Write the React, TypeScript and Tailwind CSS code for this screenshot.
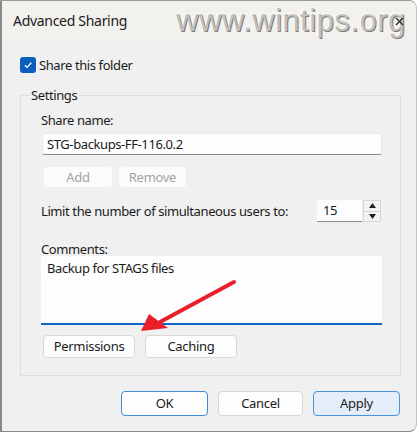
import React from "react";

const font = { fontFamily: '"Noto Sans", "Open Sans", sans-serif' };

function Btn({ children, className }: { children: React.ReactNode; className: string }) {
  return (
    <div className={`flex items-center justify-center rounded-[4px] border text-[13px] tracking-[-0.3px] leading-none ${className}`}>
      {children}
    </div>
  );
}

export default function App() {
  return (
    <div className="w-[420px] h-[433px] bg-white" style={font}>
      <div className="relative w-[417px] h-[432px] flex flex-col border-l-2 border-t border-b border-r border-l-[#8a8a8a] border-t-[#9a9a9a] border-b-[#8a8a8a] border-r-[#c4c4c4] rounded-tr-[8px] rounded-br-[8px] overflow-hidden bg-[#f0f0f0] text-[#1b1b1b] text-[13px] tracking-[-0.4px]">
        {/* Title bar */}
        <div className="relative h-[37px] shrink-0 bg-[#f3f1ee] flex items-center pl-[11px]">
          <span className="text-[14px] tracking-[-0.3px] leading-none pt-[2px] text-[#1a1a1a]">Advanced Sharing</span>
          <span
            className="absolute left-[174px] top-[-3px] text-[31px] tracking-[0.5px] text-[#c4c1bd] [text-shadow:1px_1px_0_#7a7a7a,-1px_-1px_0_#ffffff]"
            style={{ fontFamily: '"Liberation Sans", Arial, sans-serif' }}
          >
            www.wintips.org
          </span>
          <svg className="absolute left-[393px] top-[16px]" width="9" height="9" viewBox="0 0 9 9">
            <path d="M1 1 L8 8 M8 1 L1 8" stroke="#2a2a2a" strokeWidth="1.3" />
          </svg>
        </div>

        {/* Body */}
        <div className="flex flex-col px-[18px] pt-[19px]">
          <div className="flex items-center h-[16px]">
            <div className="w-[16px] h-[16px] rounded-[3px] bg-[#0a5ebd] flex items-center justify-center">
              <svg width="10" height="10" viewBox="0 0 10 10">
                <path d="M1.8 5.2 L4 7.4 L8.3 2.8" fill="none" stroke="#fff" strokeWidth="1.3" />
              </svg>
            </div>
            <span className="ml-[3px] leading-none">Share this folder</span>
          </div>

          {/* Group box */}
          <div className="mt-[22px] w-[381px] h-[281px] border border-[#dedede] flex flex-col pl-[20px]">
            <span className="-mt-[10px] -ml-[11px] w-fit px-[1px] bg-[#f0f0f0] leading-[18px]">Settings</span>

            <span className="mt-[7px] leading-[18px]">Share name:</span>
            <div className="mt-[4px] ml-[1px] w-[340px] h-[22px] bg-[#fdfdfd] border border-[#e8e8e8] border-b-[#8a8a8a] rounded-[3px] flex items-center pl-[4px] leading-none">
              STG-backups-FF-116.0.2
            </div>

            <div className="mt-[11px] ml-[2px] flex gap-[5px]">
              <Btn className="w-[70px] h-[22px] bg-[#fbfbfb] border-[#f0f0f0] text-[#a3a3a3]">Add</Btn>
              <Btn className="w-[69px] h-[22px] bg-[#fbfbfb] border-[#f0f0f0] text-[#a3a3a3]">Remove</Btn>
            </div>

            <div className="mt-[12px] w-[340px] h-[22px] flex items-center">
              <span className="leading-none whitespace-nowrap">Limit the number of simultaneous users to:</span>
              <div className="ml-auto flex h-[22px]">
                <div className="w-[45px] h-[22px] bg-[#fdfdfd] border-b border-[#8a8a8a] flex items-center pl-[6px] leading-none">
                  15
                </div>
                <div className="ml-[1px] w-[18px] h-[22px] flex flex-col border border-[#d6d6d6] bg-[#f3f3f3]">
                  <div className="flex-1 flex items-center justify-center border-b border-[#d6d6d6]">
                    <svg width="7" height="5" viewBox="0 0 7 5"><path d="M3.5 0 L7 5 L0 5 Z" fill="#222" /></svg>
                  </div>
                  <div className="flex-1 flex items-center justify-center">
                    <svg width="7" height="5" viewBox="0 0 7 5"><path d="M0 0 L7 0 L3.5 5 Z" fill="#222" /></svg>
                  </div>
                </div>
              </div>
            </div>

            <span className="mt-[20px] leading-[14px] h-[14px]">Comments:</span>
            <div className="w-[341px] h-[69px] bg-[#fdfdfd] border-b-2 border-[#1166c4] pl-[6px] pt-[3px] leading-[18px]">
              Backup for STAGS files
            </div>

            <div className="mt-[10px] ml-[2px] flex gap-[10px]">
              <Btn className="w-[92px] h-[23px] bg-[#fdfdfd] border-[#d8d8d8]">Permissions</Btn>
              <Btn className="w-[92px] h-[23px] bg-[#fdfdfd] border-[#d8d8d8]">Caching</Btn>
            </div>
          </div>

          <div className="mt-[15px] w-[380px] flex justify-end gap-[10px]">
            <Btn className="w-[87px] h-[25px] bg-[#fdfdfd] border-[#3f8bd6]">OK</Btn>
            <Btn className="w-[85px] h-[25px] bg-[#fdfdfd] border-[#d6d6d6]">Cancel</Btn>
            <Btn className="w-[87px] h-[25px] bg-[#e3eefa] border-[#4a93dc]">Apply</Btn>
          </div>
        </div>

        {/* Red annotation arrow */}
        <svg className="absolute left-0 top-0 pointer-events-none" width="417" height="432" viewBox="0 0 417 432">
          <path d="M232 281 L158 321" stroke="#e8202a" strokeWidth="4" strokeLinecap="round" />
          <path d="M139 330 L147 313 L166 327 Z" fill="#e8202a" />
        </svg>
      </div>
    </div>
  );
}
